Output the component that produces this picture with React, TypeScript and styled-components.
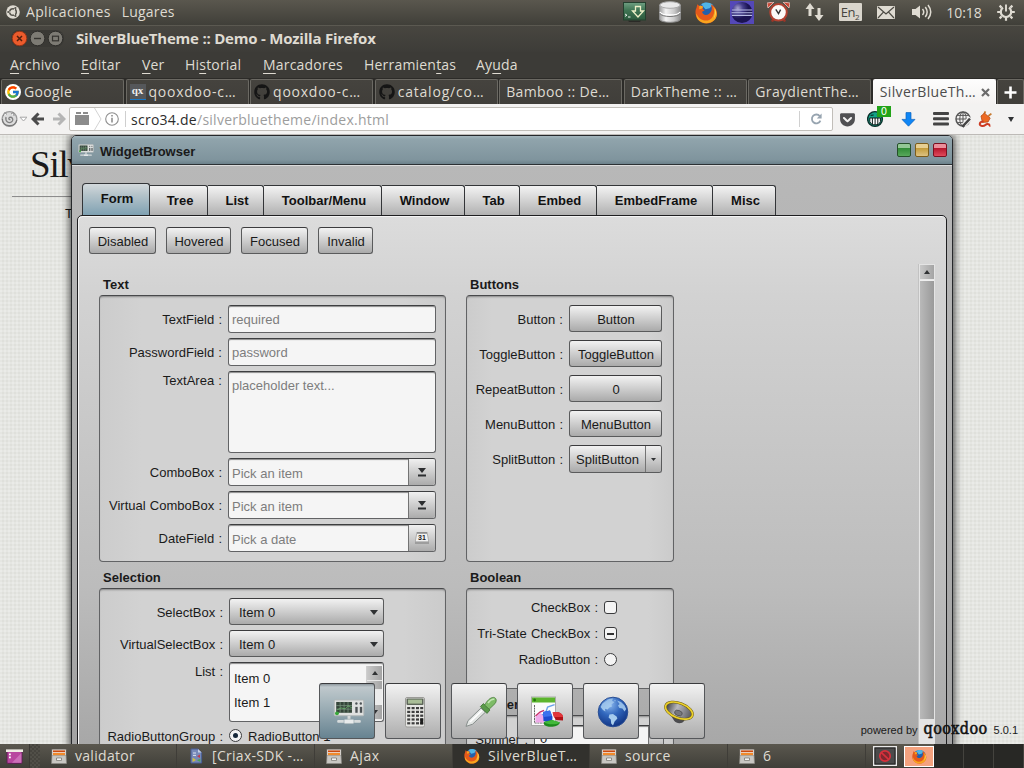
import React from "react";
import styled, { createGlobalStyle } from "styled-components";
import { FaGithub, FaGetPocket } from "react-icons/fa";
import { FcGoogle } from "react-icons/fc";

const Global = createGlobalStyle`
  * { box-sizing: border-box; }
  body { margin: 0; overflow: hidden; }
  button, input { font: inherit; }
`;

const desktopFont = `"Open Sans", "Noto Sans", sans-serif`;
const widgetFont = `"Liberation Sans", Arial, sans-serif`;

const Screen = styled.div`
  width: 1024px;
  height: 768px;
  display: flex;
  flex-direction: column;
  overflow: hidden;
  font-family: ${desktopFont};
  font-size: 14px;
  color: #dfdbd2;
`;

/* ---------- desktop panel ---------- */
const TopPanel = styled.header`
  height: 25px;
  flex: none;
  display: flex;
  align-items: flex-start;
  padding-left: 6px;
  background: linear-gradient(#5a574e, #403f39);
`;
const PanelIcon = styled.span`
  height: 24px;
  display: flex;
  align-items: center;
`;
const PanelLabel = styled.span<{ $ml: number; $ls?: number }>`
  margin-left: ${(p) => p.$ml}px;
  line-height: 23px;
  letter-spacing: ${(p) => p.$ls ?? 0}px;
`;
const Spacer = styled.div`
  flex: 1;
`;
const Indicator = styled.div<{ $w?: number }>`
  width: ${(p) => p.$w ?? 36}px;
  height: 24px;
  display: flex;
  align-items: center;
  justify-content: center;
`;

/* ---------- browser chrome ---------- */
const TitleBar = styled.div`
  height: 27px;
  flex: none;
  display: flex;
  align-items: flex-start;
  padding-left: 11px;
  border-top: 1px solid #5b5951;
  background: linear-gradient(#484640, #3d3c38);
`;
const TitleText = styled.h1`
  margin: 0 0 0 12px;
  font-size: 15px;
  line-height: 24px;
  letter-spacing: -0.22px;
`;
const MenuBar = styled.nav`
  height: 26px;
  flex: none;
  display: flex;
  padding-left: 10px;
  background: #3c3b37;
`;
const MenuItem = styled.span<{ $w: number }>`
  width: ${(p) => p.$w}px;
  line-height: 25px;
  white-space: nowrap;
  letter-spacing: 0.2px;
  u {
    text-underline-offset: 3px;
    text-decoration-thickness: 1px;
  }
`;
const TabStrip = styled.div`
  height: 26px;
  flex: none;
  display: flex;
  gap: 1.55px;
  padding: 1px 0 0 1px;
  background: #2c2b28;
`;
const BrowserTab = styled.div<{ $active?: boolean }>`
  width: 123px;
  flex: none;
  height: 25px;
  display: flex;
  align-items: center;
  gap: 3px;
  padding: 0 5px 0 ${(p) => (p.$active ? 6 : 3)}px;
  border: 1px solid ${(p) => (p.$active ? "#fbfafa" : "#6b6963")};
  border-bottom: 0;
  border-radius: 2px 2px 0 0;
  background: ${(p) => (p.$active ? "linear-gradient(#fdfdfd, #f4f2f1)" : "linear-gradient(#45433e, #403e3a)")};
  color: ${(p) => (p.$active ? "#4c4c4c" : "#dfdbd2")};
`;
const TabLabel = styled.span<{ $ls?: number; $ml?: number }>`
  flex: 1;
  white-space: nowrap;
  margin-left: ${(p) => p.$ml ?? 0}px;
  line-height: 22px;
  letter-spacing: ${(p) => p.$ls ?? 0.35}px;
`;
const NewTab = styled(BrowserTab)`
  width: 27px;
  justify-content: center;
  padding: 0;
`;
const QxIcon = styled.span`
  width: 16px;
  height: 16px;
  flex: none;
  background: #55575a;
  border-bottom: 1px solid #1878c8;
  color: #eee;
  font: bold 11px/13px "Liberation Serif", serif;
  text-align: center;
`;
const NavBar = styled.div`
  height: 31px;
  flex: none;
  display: flex;
  align-items: center;
  border-bottom: 1px solid #bdbab7;
  background: #f3f2f1;
`;
const NavCell = styled.div<{ $w: number }>`
  width: ${(p) => p.$w}px;
  height: 30px;
  flex: none;
  display: flex;
  align-items: center;
  justify-content: center;
  position: relative;
`;
const UrlBox = styled.div`
  width: 764px;
  height: 24px;
  flex: none;
  display: flex;
  align-items: center;
  border: 1px solid #c1beb9;
  border-radius: 2px;
  background: #fff;
`;
const Url = styled.span`
  flex: 1;
  padding-left: 4px;
  color: #9d9d9d;
  letter-spacing: 0.26px;
  b {
    font-weight: 400;
    color: #2c2c2c;
  }
`;
const VLine = styled.span<{ $h: number; $c?: string }>`
  width: 1px;
  height: ${(p) => p.$h}px;
  background: ${(p) => p.$c ?? "#d0d0d0"};
`;
const Badge = styled.span`
  position: absolute;
  left: 16px;
  top: 2px;
  width: 14px;
  height: 11px;
  background: #22a318;
  color: #fff;
  font: 10px/11px "DejaVu Sans", sans-serif;
  text-align: center;
`;

/* ---------- web page ---------- */
const Page = styled.main`
  height: 609px;
  flex: none;
  position: relative;
  overflow: hidden;
  padding: 10px 12px 0;
  background-color: #dfe0db;
  background-image: repeating-linear-gradient(90deg, rgba(255, 255, 255, 0.2) 0 2px, transparent 2px 4px),
    repeating-linear-gradient(0deg, rgba(255, 255, 255, 0.2) 0 2px, transparent 2px 4px);
  font-family: ${widgetFont};
  font-size: 13px;
  color: #1a1a1a;
`;
const PageTitle = styled.h2`
  width: 600px;
  margin: 0;
  padding-left: 18px;
  height: 52px;
  border-bottom: 1px solid #8d8d8d;
  font: 300 37px/40px "Liberation Serif", serif;
  letter-spacing: -1.2px;
`;
const PageText = styled.p`
  margin: 9px 0 0 53px;
`;

const DesktopWindow = styled.section`
  position: absolute;
  left: 71px;
  top: 0;
  width: 882px;
  height: 640px;
  border: 1px solid #26282b;
  border-radius: 5px 5px 0 0;
  background: linear-gradient(#b9b9b9, #a2a2a2);
  box-shadow: 0 0 9px 1px rgba(0, 0, 0, 0.75);
  display: flex;
  flex-direction: column;
`;
const Caption = styled.div`
  height: 29px;
  flex: none;
  display: flex;
  align-items: center;
  padding: 0 5px 0 6px;
  border-bottom: 1px solid #2c3134;
  border-radius: 4px 4px 0 0;
  background: linear-gradient(#a5b6bd, #90a4ac 3px, #7f949d 24px, #6c818b);
  box-shadow: 0 1px 0 #dcdcdc;
  font-weight: bold;
`;
const CaptionText = styled.span`
  flex: 1;
  padding: 3px 0 0 6px;
`;
const WinButton = styled.i<{ $tone: "green" | "yellow" | "red" }>`
  width: 14px;
  height: 14px;
  margin-left: 4px;
  border-radius: 2px;
  border: 1px solid ${(p) => ({ green: "#26502a", yellow: "#7c5d1c", red: "#7a1020" })[p.$tone]};
  background: ${(p) =>
    ({
      green: "linear-gradient(#93c795 0 4px, #2f8a35 4px, #58a85c)",
      yellow: "linear-gradient(#e6cf92 0 4px, #c39b38 4px, #dcc283)",
      red: "linear-gradient(#ea8f9b 0 4px, #b3142a 4px, #e04a5c)",
    })[p.$tone]};
`;
const TabBar = styled.div`
  height: 50px;
  flex: none;
  display: flex;
  align-items: flex-end;
  padding-left: 10px;
`;
const WidgetTab = styled.div<{ $w: number; $active?: boolean }>`
  width: ${(p) => p.$w}px;
  height: ${(p) => (p.$active ? 32 : 30)}px;
  line-height: ${(p) => (p.$active ? 29 : 30)}px;
  text-align: center;
  font-weight: bold;
  border: 1px solid #333538;
  border-width: ${(p) => (p.$active ? "1px 1px 0 1px" : "1px 1px 0 0")};
  border-radius: ${(p) => (p.$active ? "4px 3px 0 0" : "0 3px 0 0")};
  padding-left: ${(p) => (p.$active ? 2 : 3)}px;
  color: #111;
  background: ${(p) =>
    p.$active ? "linear-gradient(#d3d9dc, #b4c3ca 35%, #7fa1b2)" : "linear-gradient(#f3f3f3, #b1b1b1)"};
`;
const Pane = styled.div`
  width: 870px;
  height: 640px;
  flex: none;
  margin-left: 5px;
  padding: 10px 0 0 11px;
  border: 1px solid #1e1e20;
  border-radius: 5px 5px 0 0;
  background: linear-gradient(#dcdcdc, #d2d2d2 80px, #bcbcbc 370px, #a6a6a6 540px);
  box-shadow: inset 1px 1px 0 #f4f4f4;
`;
const DemoToolbar = styled.div`
  height: 38px;
  display: flex;
  align-items: flex-start;
  gap: 10px;
  padding-top: 1px;
`;
const PushButton = styled.button<{ $w: number; $h?: number }>`
  width: ${(p) => p.$w}px;
  height: ${(p) => p.$h ?? 27}px;
  padding: 2px 0 0 1px;
  border: 1px solid #5a5b5c;
  border-top-color: #3c3c3e;
  border-radius: 3px;
  background: linear-gradient(#f2f2f2, #aaaaaa);
  color: #1a1a1a;
  font-size: 13px;
  white-space: nowrap;
`;
const ScrollArea = styled.div`
  display: flex;
  justify-content: space-between;
`;
const Columns = styled.div`
  display: flex;
  gap: 20px;
  padding: 13px 0 0 10px;
`;
const Column = styled.div`
  display: flex;
  flex-direction: column;
  gap: 8px;
`;
const GroupTitle = styled.h3`
  margin: 0 0 3px 4px;
  font-size: 13px;
  line-height: 15px;
`;
const GroupBox = styled.div<{ $w: number; $h: number; $gap: number; $pt?: number }>`
  width: ${(p) => p.$w}px;
  height: ${(p) => p.$h}px;
  display: flex;
  flex-direction: column;
  gap: ${(p) => p.$gap}px;
  padding-top: ${(p) => p.$pt ?? 9}px;
  border: 1px solid #626365;
  border-top-color: #48494b;
  border-radius: 4px;
  background: linear-gradient(90deg, #cccccc, #d2d2d2 12%, #d2d2d2 88%, #cbcbcb);
  box-shadow: inset 0 2px 2px -1px rgba(0, 0, 0, 0.35);
`;
const FormRow = styled.div<{ $top?: boolean }>`
  display: flex;
  align-items: ${(p) => (p.$top ? "flex-start" : "center")};
`;
const Label = styled.label<{ $w: number; $pt?: number }>`
  width: ${(p) => p.$w}px;
  flex: none;
  padding: ${(p) => p.$pt ?? 2}px 6px 0 0;
  line-height: 15px;
  text-align: right;
  white-space: nowrap;
  word-spacing: 0.6px;
`;
const Field = styled.div<{ $w: number; $h: number }>`
  width: ${(p) => p.$w}px;
  height: ${(p) => p.$h}px;
  flex: none;
  display: flex;
  overflow: hidden;
  border: 1px solid #626365;
  border-top-color: #3d3e40;
  border-radius: 3px;
  background: #f5f5f5;
  box-shadow: inset 0 2px 1px -1px #8c8c8c;
`;
const Placeholder = styled.span<{ $low?: boolean }>`
  flex: 1;
  padding: ${(p) => (p.$low ? 6 : 5)}px 0 0 3px;
  line-height: 17px;
  color: #7d7d7d;
`;
const FieldButton = styled.span<{ $w: number }>`
  width: ${(p) => p.$w}px;
  display: flex;
  align-items: center;
  justify-content: center;
  border-left: 1px solid #737373;
  background: linear-gradient(#f0f0f0, #ababab);
`;
const SplitButton = styled.div`
  width: 93px;
  height: 28px;
  display: flex;
  overflow: hidden;
  border: 1px solid #5a5b5c;
  border-top-color: #3c3c3e;
  border-radius: 3px;
  background: linear-gradient(#f2f2f2, #aaaaaa);
`;
const SplitText = styled.span`
  flex: 1;
  padding-top: 1px;
  line-height: 25px;
  text-align: center;
`;
const SpinnerValue = styled.span`
  flex: 1;
  padding: 5px 0 0 5px;
`;
const Select = styled.div`
  width: 155px;
  height: 27px;
  display: flex;
  align-items: center;
  justify-content: space-between;
  padding: 2px 5px 0 9px;
  border: 1px solid #5a5b5c;
  border-top-color: #3c3c3e;
  border-radius: 3px;
  background: linear-gradient(#f2f2f2, #aaaaaa);
`;
const ListItems = styled.div`
  flex: 1;
  padding: 4px 0 0 4px;
  line-height: 24px;
`;
const MiniScroll = styled.div`
  width: 16px;
  height: 54px;
  margin: 3px 1px 0 0;
  display: flex;
  flex-direction: column;
  justify-content: space-between;
  background: #ececec;
  border-left: 1px solid #cfcfcf;
`;
const ScrollButton = styled.span<{ $h?: number }>`
  height: ${(p) => p.$h ?? 15}px;
  flex: none;
  display: flex;
  align-items: center;
  justify-content: center;
  border-bottom: 1px solid #e8e8e8;
  background: linear-gradient(90deg, #c9c9c9, #a4a4a4);
`;
const ScrollTrack = styled.div`
  width: 17px;
  height: 500px;
  margin-right: 11px;
  padding: 1px 1px 0;
  background: #e4e4e4;
  border-left: 1px solid #c2c2c2;
`;
const ScrollThumb = styled.div`
  height: 439px;
  border-top: 1px solid #eeeeee;
  background: linear-gradient(90deg, #b9b9b9, #9a9a9a);
`;
const CheckMark = styled.span<{ $round?: boolean }>`
  width: 13px;
  height: 13px;
  flex: none;
  display: flex;
  align-items: center;
  justify-content: center;
  border: 1px solid #3a3b3d;
  border-radius: ${(p) => (p.$round ? "50%" : "3px")};
  background: #f4f4f4;
`;
const Dash = styled.i`
  width: 7px;
  height: 2px;
  background: #333;
`;
const Dot = styled.i`
  width: 5px;
  height: 5px;
  border-radius: 50%;
  background: #16283a;
`;
const RadioText = styled.span`
  padding: 2px 0 0 6px;
`;
const Dock = styled.div`
  position: absolute;
  left: 319px;
  top: 548px;
  display: flex;
  gap: 10px;
`;
const DockButton = styled.div<{ $active?: boolean }>`
  width: 56px;
  height: 56px;
  display: flex;
  align-items: center;
  justify-content: center;
  padding: 2px 0 0 4px;
  border: 1px solid #55575a;
  border-top-color: #3a3b3d;
  border-radius: 3px;
  background: ${(p) =>
    p.$active ? "linear-gradient(#8d979d, #bfc8cc 3px, #a9b8be 30%, #678391)" : "linear-gradient(#f2f2f2, #adadad)"};
`;
const Powered = styled.div`
  position: absolute;
  right: 6px;
  bottom: 3px;
  display: flex;
  align-items: baseline;
  font-size: 11px;
  line-height: 22px;
`;
const PoweredLogo = styled.span`
  margin: 0 6px;
  font: 400 16px/20px "DejaVu Serif Condensed", "DejaVu Serif", serif;
  font-stretch: condensed;
  letter-spacing: 0.4px;
  -webkit-text-stroke: 0.5px #111;
  color: #111;
`;

/* ---------- bottom panel ---------- */
const TaskBar = styled.footer`
  height: 24px;
  flex: none;
  display: flex;
  background: linear-gradient(#5a574e, #403f39);
`;
const ShowDesktop = styled.div`
  width: 30px;
  display: flex;
  align-items: center;
  justify-content: center;
  border-right: 1px solid #3b3934;
`;
const Task = styled.div<{ $w: number; $active?: boolean }>`
  width: ${(p) => p.$w}px;
  display: flex;
  align-items: center;
  gap: 8px;
  padding-left: 11px;
  border-right: 1px solid #3f3d38;
  background: ${(p) => (p.$active ? "#32312d" : "transparent")};
  line-height: 23px;
  white-space: nowrap;
`;
const TaskText = styled.span<{ $ls?: number }>`
  letter-spacing: ${(p) => p.$ls ?? 0.3}px;
  padding-bottom: 2px;
`;
const Grip = styled.div`
  width: 10px;
  background: repeating-conic-gradient(#46443e 0 25%, #514f48 0 50%) 0 0 / 4px 4px;
`;
const Applet = styled.div`
  width: 38px;
  display: flex;
  align-items: center;
  justify-content: center;
`;
const Workspace = styled.div<{ $active?: boolean }>`
  width: 30px;
  display: flex;
  align-items: center;
  justify-content: center;
  margin: ${(p) => (p.$active ? "2px 0 1px" : "0")};
  border: ${(p) => (p.$active ? "1px solid #fff" : "0")};
  border-right: 1px solid ${(p) => (p.$active ? "#fff" : "#44433e")};
  background: ${(p) => (p.$active ? "#f4a27f" : "#282825")};
`;

/* ---------- drawings ---------- */
const UbuntuIcon = () => (
  <svg width="14" height="14" viewBox="0 0 14 14">
    <circle cx="7" cy="7" r="6.8" fill="#dfdbd2" />
    <circle cx="7" cy="7" r="3.3" fill="none" stroke="#55534b" strokeWidth="1.5" />
    <path d="M7 7 L2.4 7 M7 7 L9.4 3 M7 7 L9.4 11" stroke="#dfdbd2" strokeWidth="1" />
    <g fill="#55534b">
      <circle cx="2.3" cy="7" r="1.1" />
      <circle cx="9.4" cy="3" r="1.1" />
      <circle cx="9.4" cy="11" r="1.1" />
    </g>
  </svg>
);

const Firefox = ({ s }: { s: number }) => (
  <svg width={s} height={s} viewBox="0 0 22 22">
    <circle cx="11" cy="10.6" r="9.2" fill="#2360ad" />
    <path d="M6 3 C9 .6 14 1 17 3.5 L14 7 L10 8 Z" fill="#50b5e6" />
    <path
      d="M2.2 3.2 L4.2 4.8 C5.6 4.2 6.8 4.6 7.6 5.4 L7.2 7.4 L9.2 9.2 L6.8 10.4 C7 13.4 11 14.2 13.2 12.4 C15.4 11 17.4 7.8 15 3.2 C20.5 5.6 23 12.4 19.2 17.4 C15.4 22.6 7.2 22.8 3 18 C-.4 14 .2 8.6 1.4 6.6 Z"
      fill="#e5591b"
    />
    <path
      d="M1.4 12 C3.4 17.8 9.6 20.4 14.4 17.6 C18.6 15 19.2 9 17 5 C21.6 9 22 14.6 18.6 18.2 C14 22.6 6.6 22.2 3 18 C1.6 16.2 1 14 1.4 12 Z"
      fill="#f9a51e"
    />
    <path d="M19 7 C20.6 10.4 20 14 18 16.8 C19.2 13.6 19.4 10 19 7 Z" fill="#ffe36a" />
    <path d="M4.2 4.8 C5.6 4.2 6.8 4.6 7.6 5.4 L7 7.2 L4 8 Z" fill="#f9a51e" />
  </svg>
);

const TerminalIcon = () => (
  <svg width="23" height="20" viewBox="0 0 23 20">
    <defs>
      <linearGradient id="term" x2="0" y2="1">
        <stop stopColor="#6f9f82" />
        <stop offset=".45" stopColor="#3f7453" />
        <stop offset="1" stopColor="#2c5a3d" />
      </linearGradient>
    </defs>
    <path d="M5 18.5 H18 L17 20 H6 Z" fill="#2b2a27" />
    <rect x=".5" y=".5" width="22" height="17.5" fill="url(#term)" stroke="#25402f" />
    <path d="M2 12 L4 13.2 L2 14.4 M5 15 H7.5" stroke="#e8efe9" fill="none" />
    <path d="M12.5 4.5 H17.5 V9 H20.5 L15 15 L9.5 9 H12.5 Z" fill="none" stroke="#eef0c8" strokeWidth="1.3" />
  </svg>
);

const DatabaseIcon = () => (
  <svg width="22" height="22" viewBox="0 0 22 22">
    <defs>
      <linearGradient id="db">
        <stop stopColor="#9b9b9b" />
        <stop offset=".3" stopColor="#f3f3f3" />
        <stop offset=".7" stopColor="#c9c9c9" />
        <stop offset="1" stopColor="#8c8c8c" />
      </linearGradient>
    </defs>
    <path d="M.5 4 V18 C.5 22.4 21.5 22.4 21.5 18 V4 Z" fill="url(#db)" stroke="#8b8b8b" />
    <ellipse cx="11" cy="4" rx="10.2" ry="3.3" fill="#e9e9e9" stroke="#aaa" />
    <path d="M1 11 C3 15 19 15 21 11" fill="none" stroke="#fff" strokeWidth="1.4" />
    <path d="M1 12.5 C3 16.5 19 16.5 21 12.5" fill="none" stroke="#777" />
  </svg>
);

const EclipseIcon = () => (
  <svg width="24" height="23" viewBox="0 0 24 23">
    <defs>
      <radialGradient id="ecl" cx=".3" cy=".3">
        <stop stopColor="#a7a2cf" />
        <stop offset=".5" stopColor="#463f8e" />
        <stop offset="1" stopColor="#1b1452" />
      </radialGradient>
    </defs>
    <rect width="24" height="23" fill="#5448b8" />
    <circle cx="12" cy="11.5" r="10.5" fill="url(#ecl)" />
    <path d="M2 9 H22 M1.5 11.7 H22.5 M2 14.4 H22" stroke="#b9bde6" strokeWidth="1.1" />
  </svg>
);

const AlarmIcon = () => (
  <svg width="23" height="20" viewBox="0 0 23 20">
    <path d="M1 6 L0 1 L7 0 Z M22 6 L23 1 L16 0 Z" fill="#c94a38" stroke="#ecc7c0" strokeWidth=".8" />
    <path d="M5 19.5 L7 16 M18 19.5 L16 16" stroke="#9c3527" strokeWidth="2.4" />
    <circle cx="11.5" cy="10.3" r="8.3" fill="#fbfaf8" stroke="#b14231" strokeWidth="2" />
    <path d="M8.8 7.4 L11.5 11.6 L13.6 7.6" fill="none" stroke="#333" strokeWidth="1.4" />
  </svg>
);

const ArrowsIcon = () => (
  <svg width="19" height="18" viewBox="0 0 19 18" fill="#dfdbd2">
    <path d="M5 0 L9.5 6 H6.5 V13 H3.5 V6 H.5 Z M14 18 L9.5 12 H12.5 V5 H15.5 V12 H18.5 Z" />
  </svg>
);

const Lang = styled.span`
  width: 23px;
  height: 18px;
  border-radius: 1px;
  background: #d9d5cc;
  color: #46443e;
  font-size: 13px;
  line-height: 19px;
  text-align: center;
  letter-spacing: -0.5px;
  sub {
    font-size: 8px;
    vertical-align: -3px;
    line-height: 0;
  }
`;

const MailIcon = () => (
  <svg width="18" height="13" viewBox="0 0 18 13">
    <rect width="18" height="13" rx="1" fill="#dfdbd2" />
    <path d="M1 1 L9 8 L17 1 M1 12 L6.4 6.2 M17 12 L11.6 6.2" stroke="#4b4942" strokeWidth="1.2" fill="none" />
  </svg>
);

const SoundIcon = () => (
  <svg width="21" height="16" viewBox="0 0 21 16">
    <path d="M0 5 H3.5 L8 1.5 V14.5 L3.5 11 H0 Z" fill="#dfdbd2" />
    <path d="M10.5 5 Q13 8 10.5 11 M13.3 3 Q17 8 13.3 13 M16 1 Q21.5 8 16 15" fill="none" stroke="#dfdbd2" strokeWidth="1.5" />
  </svg>
);

const GearIcon = () => (
  <svg width="18" height="18" viewBox="0 0 18 18" fill="none" stroke="#dfdbd2">
    <path d="M12 4.6 A5.2 5.2 0 1 1 6 4.6" strokeWidth="2.2" />
    <path d="M9 1.5 V8.5" strokeWidth="1.9" />
    <path
      d="M4.6 4.6 L2.6 2.6 M13.4 4.6 L15.4 2.6 M3.2 9 H.2 M14.8 9 H17.8 M4.6 13.4 L2.6 15.4 M13.4 13.4 L15.4 15.4 M9 14.8 V17.8"
      strokeWidth="2.2"
    />
  </svg>
);

const WindowControls = () => (
  <svg width="53" height="25" viewBox="0 -3.5 53 25">
    <rect width="53" height="17" y=".5" rx="8" fill="#3a3935" />
    <circle cx="8.5" cy="9" r="7.3" fill="#ec5b2c" stroke="#8e3519" />
    <path d="M6 6.5 L11 11.5 M11 6.5 L6 11.5" stroke="#51200f" strokeWidth="1.5" />
    <circle cx="26.5" cy="9" r="7.3" fill="#7d7b74" stroke="#2f2e2b" />
    <path d="M23 9 H30" stroke="#34332f" strokeWidth="1.4" />
    <circle cx="44.5" cy="9" r="7.3" fill="#7d7b74" stroke="#2f2e2b" />
    <rect x="41.5" y="6.7" width="6" height="4.6" fill="none" stroke="#34332f" strokeWidth="1.2" />
  </svg>
);

const IdentityIcon = () => (
  <svg width="57" height="22" viewBox="0 0 57 22">
    <g fill="#8c8c8c">
      <rect x="5" y="7" width="14" height="10" />
      <rect x="6" y="4" width="5" height="2" />
      <rect x="13" y="4" width="5" height="2" />
    </g>
    <path d="M24.5 0 L31 11 L24.5 22" fill="none" stroke="#d3d3d3" />
    <circle cx="42" cy="11" r="6.3" fill="none" stroke="#8e8e8e" strokeWidth="1.1" />
    <path d="M42 9.8 V14.4 M42 7 V8.4" stroke="#8e8e8e" strokeWidth="1.6" />
    <path d="M55.5 3 V19" stroke="#cfcfcf" />
  </svg>
);

const FaceGlyph = () => (
  <svg width="26" height="18" viewBox="0 0 26 18">
    <circle cx="8.5" cy="9" r="7.4" fill="#dcdcdc" stroke="#9a9a9a" strokeWidth="1.2" />
    <path d="M1.4 9 C1.4 17 14 18.4 15.8 10" fill="none" stroke="#777" strokeWidth="1.2" />
    <path d="M2.4 6 L3.6 2.6 L6 4.4 M10 4 L12.6 2.4 L13 6" stroke="#8a8a8a" fill="#f3f3f3" strokeWidth="1" />
    <path d="M5 7 C4 12 8 14 11 11.6 C13 9.4 11 6.6 8.6 7.4 C7 8.4 8 10 9.4 9.6" stroke="#808080" fill="none" strokeWidth="1.3" />
    <path d="M19 7.2 L22.5 11 L26 7.2 Z" fill="#fff" stroke="#a6a6a6" />
  </svg>
);

const ArrowSvg = styled.svg<{ $flip?: boolean }>`
  transform: ${(p) => (p.$flip ? "scaleX(-1)" : "none")};
`;
const NavArrow = ({ right }: { right?: boolean }) => (
  <ArrowSvg $flip={right} width="14" height="14" viewBox="0 0 14 14">
    <path d="M7.5 1.5 L2 7 L7.5 12.5 M2.5 7 H13" fill="none" stroke={right ? "#b5b5b5" : "#4b4b4b"} strokeWidth="3" />
  </ArrowSvg>
);

const ReloadIcon = () => (
  <svg width="12" height="12" viewBox="0 0 12 12">
    <path d="M9.8 3.2 A4.4 4.4 0 1 0 10.4 7.6" fill="none" stroke="#97a4b0" strokeWidth="1.8" />
    <path d="M11.6 .6 V5.4 H6.8 Z" fill="#97a4b0" />
  </svg>
);

const GrinIcon = () => (
  <svg width="17" height="18" viewBox="0 0 17 18">
    <circle cx="8" cy="9" r="7.4" fill="#12a388" stroke="#0b2f2a" strokeWidth="1.4" />
    <path d="M2.8 8 H13.4 V11.6 C12.4 16 4 16 2.8 11.6 Z" fill="#fff" stroke="#0e1a18" />
    <path d="M5.4 8 V14 M8.1 8 V15 M10.8 8 V14 M3.6 5.4 L6.6 5 M9.8 5 L12.6 5.4" stroke="#0e1a18" />
  </svg>
);

const DownIcon = () => (
  <svg width="15" height="15" viewBox="0 0 15 15">
    <path d="M5 .6 H10 V7.4 H14 L7.5 14.2 L1 7.4 H5 Z" fill="#0f86f5" stroke="#0a62bd" strokeWidth=".7" />
  </svg>
);

const MenuLines = () => (
  <svg width="16" height="14" viewBox="0 0 16 14" fill="#444">
    <rect y="0" width="16" height="3" rx="1" />
    <rect y="5.2" width="16" height="3" rx="1" />
    <rect y="10.4" width="16" height="3" rx="1" />
  </svg>
);

const GlobePencil = () => (
  <svg width="17" height="17" viewBox="0 0 17 17" fill="none" stroke="#555">
    <circle cx="8" cy="8" r="7" strokeWidth="1.5" />
    <ellipse cx="8" cy="8" rx="3.2" ry="7" />
    <path d="M8 1 V15 M1 8 H15 M2.3 4.4 H13.7 M2.3 11.6 H13.7" />
    <path d="M15.6 7 L8.6 14.4" stroke="#f3f2f1" strokeWidth="5" />
    <path d="M15 7.6 L9 14 L7.6 16" stroke="#444" strokeWidth="2.4" />
  </svg>
);

const PlugIcon = () => (
  <svg width="14" height="17" viewBox="0 0 14 17">
    <path d="M6 3.4 L7.4 .4 M10.4 5 L13.4 2.6" stroke="#c77a30" strokeWidth="1.8" />
    <path d="M3 5 L6.4 2.2 L12.2 7 L10 11 L4.4 11.4 Z" fill="#ee6a23" stroke="#b84a16" strokeWidth=".8" />
    <path d="M5.6 10.6 C1 10.6 .6 14.6 4 15 C7.6 15.6 7 12.6 10 13 C12 13.2 11 15 12.4 15" fill="none" stroke="#cc3a22" strokeWidth="2" />
  </svg>
);

const Triangle = ({ w, h, up }: { w: number; h: number; up?: boolean }) => (
  <svg width={w} height={h} viewBox="0 0 10 6" preserveAspectRatio="none">
    <path d={up ? "M0 6 L5 0 L10 6 Z" : "M0 0 L5 6 L10 0 Z"} fill="#303234" />
  </svg>
);

const ComboArrow = () => (
  <svg width="8" height="9" viewBox="0 0 8 9" fill="#2c2e30">
    <path d="M0 0 H8 L4 5 Z" />
    <rect y="6.5" width="8" height="2" />
  </svg>
);

const CalendarIcon = () => (
  <svg width="14" height="12" viewBox="0 0 14 12">
    <path d="M2 0 H12 L14 11 V12 H0 V11 Z" fill="#f1f1f1" stroke="#999" strokeWidth=".7" />
    <rect x="0" y="9.4" width="14" height="2.6" fill="#9d9d9d" />
    <rect x="2" y="0" width="10" height="1.8" fill="#8e8e8e" />
    <text x="7" y="8.2" textAnchor="middle" fontSize="7" fontWeight="bold" fontFamily="Liberation Sans" fill="#222">
      31
    </text>
  </svg>
);

const MonitorIcon = ({ s }: { s: number }) => (
  <svg width={s} height={s * 0.8} viewBox="0 0 32 26">
    <rect x="1" y="1" width="30" height="16" rx="1" fill="#dfe1e0" stroke="#b3b8b8" />
    <rect x="3" y="3" width="16" height="11" fill="#35453a" />
    <path d="M3 6.7 H19 M3 10.3 H19 M7 3 V14 M11 3 V14 M15 3 V14" stroke="#7f9b85" strokeWidth=".7" />
    <path d="M4 11 L8 9 L12 10 L15 7 L19 9" stroke="#6fbf6e" fill="none" strokeWidth=".7" />
    <circle cx="3.8" cy="14.6" r="2" fill="#38a83a" />
    <g fill="#4c5255">
      <circle cx="23.5" cy="4.6" r="1.2" />
      <circle cx="28" cy="4.6" r="1.2" />
      <rect x="22.4" y="8" width="2.4" height="6" />
      <rect x="27" y="8" width="2.4" height="6" />
    </g>
    <path d="M16 17 V22" stroke="#d5d9da" strokeWidth="3" />
    <rect x="4" y="21.4" width="24" height="2.6" rx="1" fill="#d6dbdc" />
    <rect x="11" y="20.6" width="10" height="4.6" rx="1" fill="#e8ebec" stroke="#8fa0a7" strokeWidth=".6" />
  </svg>
);

const CalculatorIcon = () => (
  <svg width="22" height="32" viewBox="0 0 22 32">
    <rect x="1.5" y="1.5" width="19" height="29.5" rx="1.5" fill="#e6e6e3" stroke="#9b9b98" />
    <rect x="2.5" y="2.5" width="17" height="6.5" rx="1" fill="#5d6659" />
    <rect x="4" y="3.6" width="14" height="4" fill="#a9bd97" />
    {[11, 14.8, 18.6, 22.4, 26.2].map((y) =>
      [3.2, 7.6, 12, 16.2].map((x) => <rect key={`${x}-${y}`} x={x} y={y} width="3" height="2.2" fill="#3e3e3e" />),
    )}
    <rect x="16.2" y="22.4" width="3" height="6" fill="#1d1d1d" />
  </svg>
);

const EyedropperIcon = () => (
  <svg width="34" height="32" viewBox="0 0 34 32">
    <path d="M2 30.4 L4 24.6 L17 12 L21.4 16.2 L8.6 28.2 Z" fill="#e3e6e4" stroke="#868d8b" strokeWidth="1" />
    <path d="M6 26 L18 14.4" stroke="#fff" strokeWidth="1.6" />
    <path d="M16.4 10.6 L19.4 7.6 L26 14 L23 17.4 Z" fill="#5a9a4a" stroke="#3f7133" strokeWidth=".8" />
    <path d="M20.6 9 C23 5 26 1.4 29.6 1.4 C33 2 32.6 5.6 31 7.6 L25.2 13.2 Z" fill="#7dbb66" stroke="#457a37" strokeWidth=".8" />
    <path d="M24 7 C26 4.4 28.4 3 30.4 3.4" stroke="#c3e6b4" strokeWidth="1.6" fill="none" />
  </svg>
);

const ChartIcon = () => (
  <svg width="34" height="32" viewBox="0 0 34 32">
    <rect x="1.5" y="1" width="24" height="28.5" fill="#fbfbfb" stroke="#a9a9a9" />
    <rect x="2" y="1.5" width="23" height="5" fill="#5cb52e" />
    <circle cx="4.6" cy="4" r="1.4" fill="#23760d" />
    <path d="M4.5 9 V27 H16" fill="none" stroke="#666" strokeDasharray="2 .6" />
    <path d="M5.5 26.5 V21 L10 17 L14 19 V26.5 Z" fill="#f0a9ea" />
    <path d="M5.5 20 L10 16 L14 14.4" fill="none" stroke="#c8306a" strokeWidth="1.4" />
    <path d="M12 19 L15.6 17 L17.6 11 L24.6 8.6" fill="none" stroke="#6aa2e8" strokeWidth="1.4" />
    <path d="M13 16 L20 14.5 L22.5 21 L22 27.5 L13.5 25 Z" fill="#1c4bd0" />
    <path d="M13 16 L20 14.5 L22 20 L13.5 21 Z" fill="#3a71ee" />
    <path d="M24 21 L22.6 16.6 C27 14.8 33 17 33 21 V24.4 L26 24 Z" fill="#b01218" />
    <path d="M24 21 L22.6 16.6 C27 14.8 33 17 33 21 Z" fill="#e2363b" />
    <path d="M14 26 L22 24 L30 26.4 C28 31.6 17 32 14 28.4 Z" fill="#1c8a1c" />
    <path d="M14 26 L22 24 L30 26.4 C27 29 17 29 14 26 Z" fill="#42b93a" />
  </svg>
);

const GlobeIcon = () => (
  <svg width="32" height="32" viewBox="0 0 32 32">
    <defs>
      <radialGradient id="earth" cx=".4" cy=".25" r=".8">
        <stop stopColor="#8ab7ee" />
        <stop offset=".45" stopColor="#3167bd" />
        <stop offset="1" stopColor="#0e2f7e" />
      </radialGradient>
      <linearGradient id="land" x2="0" y2="1">
        <stop stopColor="#9cc2ea" />
        <stop offset="1" stopColor="#c9ecff" />
      </linearGradient>
    </defs>
    <circle cx="16" cy="16" r="14.8" fill="url(#earth)" stroke="#2a4f94" />
    <path
      d="M3.6 11 L5.4 7.4 L9 5 L12 3 L16 2.6 L15 5 L17.6 6 L14.4 8.4 L15 10.4 L12.4 11.4 L10.6 13.6 L8 12.8 L8.4 15.6 L6 14 Z M12.4 18.6 L16 18 L19.6 20.4 L20.4 22.6 L17.6 25.4 L16 29.4 L14.2 27.6 L13.8 23.6 L11.6 21.4 Z M20 4.4 L24 6 L27.4 9.2 L29.2 13 L27.6 15.6 L25.4 12.6 L22.4 12 L21 9.4 L22.6 8 Z M17 4 L19 4.6 L18 5.6 Z"
      fill="url(#land)"
      opacity=".85"
    />
  </svg>
);

const SpeakerIcon = () => (
  <svg width="32" height="26" viewBox="0 0 32 26">
    <defs>
      <linearGradient id="cone">
        <stop stopColor="#3a3a3c" />
        <stop offset=".4" stopColor="#b9b9be" />
        <stop offset="1" stopColor="#55555a" />
      </linearGradient>
    </defs>
    <path d="M7 15 L11 21.4 C13.4 25 19 25 21 22 L22.4 18 Z" fill="#4c4c4f" />
    <ellipse cx="16" cy="11.6" rx="14.2" ry="7.4" transform="rotate(21 16 11.6)" fill="url(#cone)" stroke="#6a5a10" strokeWidth="2.6" />
    <ellipse cx="16" cy="11.6" rx="14.2" ry="7.4" transform="rotate(21 16 11.6)" fill="none" stroke="#ecd02c" strokeWidth="1.7" />
    <ellipse cx="15.4" cy="14" rx="4" ry="2.6" transform="rotate(20 15.4 14)" fill="#77777c" stroke="#4a4a4d" strokeWidth=".7" />
  </svg>
);

const DrawerIcon = () => (
  <svg width="16" height="15" viewBox="0 0 16 15">
    <rect x="1" y=".3" width="14" height="7" fill="#f5f0ea" stroke="#8b8680" strokeWidth=".6" />
    <rect x="2" y="1.4" width="12" height="1.8" fill="#c9490f" />
    <rect x="2" y="4" width="12" height="2.6" fill="#f08a2c" />
    <path d="M1 6.6 H15 L15.5 14.6 H.5 Z" fill="#c9c7c3" stroke="#8f8d88" strokeWidth=".6" />
    <path d="M5.5 9 V11.4 H10.5 V9 Z" fill="#fff" stroke="#77756f" strokeWidth=".8" />
  </svg>
);

const DocIcon = () => (
  <svg width="16" height="16" viewBox="0 0 16 16">
    <path d="M3 1 H10 L13.6 4.6 V15 H3 Z" fill="#7789b8" stroke="#4b5f96" />
    <path d="M10 1 V4.6 H13.6" fill="#c6cfe6" />
    <path d="M5 5 H8 M5 7.4 H8" stroke="#dde3f2" />
    <path d="M12 6.6 V10 L9 8.3 Z" fill="#c43b4b" />
    <path d="M4.6 9.6 L8 12 L4.6 14 Z" fill="#d2c13b" />
    <path d="M12.4 10.4 V14 L9 12.2 Z" fill="#4ba35a" />
  </svg>
);

const DesktopIcon = () => (
  <svg width="17" height="15" viewBox="0 0 17 15">
    <rect x="1" y="2" width="15" height="12.4" rx="1" fill="#b8479f" stroke="#5b1f52" />
    <rect x="0" y=".4" width="17" height="2.6" fill="#efece4" />
    <path d="M3 5.4 H4.8 M3 8.4 H4.8" stroke="#fff" strokeWidth="1.8" />
    <path d="M6 13.8 L15.4 4 V13.8 Z" fill="#cc6fb9" />
  </svg>
);

const BlockedIcon = () => (
  <svg width="24" height="20" viewBox="0 0 24 20">
    <rect x=".7" y=".7" width="22.6" height="18.6" fill="#4b4b4b" stroke="#e8e8e8" strokeWidth="1.4" />
    <rect x="2" y="2" width="20" height="16" fill="none" stroke="#222" />
    <circle cx="12" cy="10" r="5.2" fill="#80282f" stroke="#d8303c" strokeWidth="1.7" />
    <path d="M8.4 6.6 L15.6 13.4" stroke="#d8303c" strokeWidth="1.7" />
  </svg>
);

const PlusIcon = () => (
  <svg width="13" height="13" viewBox="0 0 13 13">
    <path d="M6.5 .5 V12.5 M.5 6.5 H12.5" stroke="#fff" strokeWidth="2.6" />
  </svg>
);

const CloseIcon = () => (
  <svg width="9" height="9" viewBox="0 0 9 9">
    <path d="M1 1 L8 8 M8 1 L1 8" stroke="#6b6b6b" strokeWidth="2.2" />
  </svg>
);

const GithubMark = styled(FaGithub)`
  width: 16px;
  height: 16px;
  flex: none;
  color: #151515;
`;
const GoogleMark = styled(FcGoogle)`
  width: 16px;
  height: 16px;
  flex: none;
  padding: 1px;
  border-radius: 8px;
  background: #fff;
`;

const widgetTabs: [string, number][] = [
  ["Form", 68], ["Tree", 58], ["List", 56], ["Toolbar/Menu", 118], ["Window", 83],
  ["Tab", 55], ["Embed", 77], ["EmbedFrame", 116], ["Misc", 63],
];

export default function App() {
  return (
    <Screen>
      <Global />
      <TopPanel>
        <PanelIcon><UbuntuIcon /></PanelIcon>
        <PanelLabel $ml={6} $ls={0.33}>Aplicaciones</PanelLabel>
        <PanelLabel $ml={11} $ls={0.2}>Lugares</PanelLabel>
        <Spacer />
        <Indicator><TerminalIcon /></Indicator>
        <Indicator><DatabaseIcon /></Indicator>
        <Indicator><Firefox s={23} /></Indicator>
        <Indicator><EclipseIcon /></Indicator>
        <Indicator><AlarmIcon /></Indicator>
        <Indicator><ArrowsIcon /></Indicator>
        <Indicator><Lang>En<sub>2</sub></Lang></Indicator>
        <Indicator><MailIcon /></Indicator>
        <Indicator><SoundIcon /></Indicator>
        <Indicator $w={48}>10:18</Indicator>
        <Indicator><GearIcon /></Indicator>
      </TopPanel>
      <TitleBar>
        <WindowControls />
        <TitleText>SilverBlueTheme :: Demo - Mozilla Firefox</TitleText>
      </TitleBar>
      <MenuBar>
        <MenuItem $w={71}><u>A</u>rchivo</MenuItem>
        <MenuItem $w={61}><u>E</u>ditar</MenuItem>
        <MenuItem $w={43}><u>V</u>er</MenuItem>
        <MenuItem $w={78}>Hi<u>s</u>torial</MenuItem>
        <MenuItem $w={101}><u>M</u>arcadores</MenuItem>
        <MenuItem $w={112}>Herramien<u>t</u>as</MenuItem>
        <MenuItem $w={60}>Ay<u>u</u>da</MenuItem>
      </MenuBar>
      <TabStrip>
        <BrowserTab><GoogleMark /><TabLabel>Google</TabLabel></BrowserTab>
        <BrowserTab><QxIcon>qx</QxIcon><TabLabel $ls={0.75}>qooxdoo-c…</TabLabel></BrowserTab>
        <BrowserTab><GithubMark /><TabLabel $ls={0.75}>qooxdoo-c…</TabLabel></BrowserTab>
        <BrowserTab><GithubMark /><TabLabel $ls={0.8}>catalog/co…</TabLabel></BrowserTab>
        <BrowserTab><TabLabel $ml={3}>Bamboo :: De…</TabLabel></BrowserTab>
        <BrowserTab><TabLabel $ml={3}>DarkTheme :: …</TabLabel></BrowserTab>
        <BrowserTab><TabLabel $ml={3}>GraydientThe…</TabLabel></BrowserTab>
        <BrowserTab $active><TabLabel>SilverBlueTh…</TabLabel><CloseIcon /></BrowserTab>
        <NewTab><PlusIcon /></NewTab>
      </TabStrip>
      <NavBar>
        <NavCell $w={28}><FaceGlyph /></NavCell>
        <NavCell $w={20}><NavArrow /></NavCell>
        <NavCell $w={21}><NavArrow right /></NavCell>
        <UrlBox>
          <IdentityIcon />
          <Url><b>scro34.de</b>/silverbluetheme/index.html</Url>
          <VLine $h={16} />
          <NavCell $w={32}><ReloadIcon /></NavCell>
        </UrlBox>
        <NavCell $w={28}><FaGetPocket size={17} color="#505052" /></NavCell>
        <NavCell $w={28}><GrinIcon /><Badge>0</Badge></NavCell>
        <NavCell $w={39}><DownIcon /></NavCell>
        <VLine $h={26} $c="#a9bccf" />
        <NavCell $w={26}><MenuLines /></NavCell>
        <NavCell $w={18}><GlobePencil /></NavCell>
        <NavCell $w={25}><PlugIcon /></NavCell>
        <NavCell $w={28}><Triangle w={6} h={5} /></NavCell>
      </NavBar>
      <Page>
        <PageTitle>Silv</PageTitle>
        <PageText>This</PageText>
        <DesktopWindow>
          <Caption>
            <MonitorIcon s={16} />
            <CaptionText>WidgetBrowser</CaptionText>
            <WinButton $tone="green" />
            <WinButton $tone="yellow" />
            <WinButton $tone="red" />
          </Caption>
          <TabBar>
            {widgetTabs.map(([name, w], i) => (
              <WidgetTab key={name} $w={w} $active={i === 0}>{name}</WidgetTab>
            ))}
          </TabBar>
          <Pane>
            <DemoToolbar>
              <PushButton $w={67}>Disabled</PushButton>
              <PushButton $w={65}>Hovered</PushButton>
              <PushButton $w={67}>Focused</PushButton>
              <PushButton $w={55}>Invalid</PushButton>
            </DemoToolbar>
            <ScrollArea>
              <Columns>
                <Column>
                  <div>
                    <GroupTitle>Text</GroupTitle>
                    <GroupBox $w={347} $h={267} $gap={5}>
                      <FormRow><Label $w={128} $pt={0}>TextField :</Label><Field $w={208} $h={28}><Placeholder>required</Placeholder></Field></FormRow>
                      <FormRow><Label $w={128} $pt={0}>PasswordField :</Label><Field $w={208} $h={28}><Placeholder>password</Placeholder></Field></FormRow>
                      <FormRow $top><Label $w={128}>TextArea :</Label><Field $w={208} $h={82}><Placeholder>placeholder text...</Placeholder></Field></FormRow>
                      <FormRow><Label $w={128} $pt={0}>ComboBox :</Label><Field $w={208} $h={28}><Placeholder $low>Pick an item</Placeholder><FieldButton $w={27}><ComboArrow /></FieldButton></Field></FormRow>
                      <FormRow><Label $w={128} $pt={0}>Virtual ComboBox :</Label><Field $w={208} $h={28}><Placeholder $low>Pick an item</Placeholder><FieldButton $w={27}><ComboArrow /></FieldButton></Field></FormRow>
                      <FormRow><Label $w={128} $pt={0}>DateField :</Label><Field $w={208} $h={28}><Placeholder $low>Pick a date</Placeholder><FieldButton $w={27}><CalendarIcon /></FieldButton></Field></FormRow>
                    </GroupBox>
                  </div>
                  <div>
                    <GroupTitle>Selection</GroupTitle>
                    <GroupBox $w={347} $h={200} $gap={5}>
                      <FormRow><Label $w={129}>SelectBox :</Label><Select>Item 0<Triangle w={8} h={5} /></Select></FormRow>
                      <FormRow><Label $w={129}>VirtualSelectBox :</Label><Select>Item 0<Triangle w={8} h={5} /></Select></FormRow>
                      <FormRow $top>
                        <Label $w={129}>List :</Label>
                        <Field $w={155} $h={60}>
                          <ListItems>Item 0<br />Item 1</ListItems>
                          <MiniScroll>
                            <div>
                              <ScrollButton><Triangle w={6} h={4} up /></ScrollButton>
                              <ScrollButton $h={9} />
                            </div>
                            <ScrollButton><Triangle w={6} h={4} /></ScrollButton>
                          </MiniScroll>
                        </Field>
                      </FormRow>
                      <FormRow><Label $w={129}>RadioButtonGroup :</Label><CheckMark $round><Dot /></CheckMark><RadioText>RadioButton 1</RadioText></FormRow>
                    </GroupBox>
                  </div>
                </Column>
                <Column>
                  <div>
                    <GroupTitle>Buttons</GroupTitle>
                    <GroupBox $w={208} $h={267} $gap={8}>
                      <FormRow><Label $w={102}>Button :</Label><PushButton $w={93}>Button</PushButton></FormRow>
                      <FormRow><Label $w={102}>ToggleButton :</Label><PushButton $w={93}>ToggleButton</PushButton></FormRow>
                      <FormRow><Label $w={102}>RepeatButton :</Label><PushButton $w={93}>0</PushButton></FormRow>
                      <FormRow><Label $w={102}>MenuButton :</Label><PushButton $w={93}>MenuButton</PushButton></FormRow>
                      <FormRow><Label $w={102} $pt={0}>SplitButton :</Label><SplitButton><SplitText>SplitButton</SplitText><FieldButton $w={16}><Triangle w={5} h={3} /></FieldButton></SplitButton></FormRow>
                    </GroupBox>
                  </div>
                  <div>
                    <GroupTitle>Boolean</GroupTitle>
                    <GroupBox $w={208} $h={101} $gap={11} $pt={11}>
                      <FormRow><Label $w={137} $pt={0}>CheckBox :</Label><CheckMark /></FormRow>
                      <FormRow><Label $w={137} $pt={0}>Tri-State CheckBox :</Label><CheckMark><Dash /></CheckMark></FormRow>
                      <FormRow><Label $w={137} $pt={0}>RadioButton :</Label><CheckMark $round /></FormRow>
                    </GroupBox>
                  </div>
                  <div>
                    <GroupTitle>Number</GroupTitle>
                    <GroupBox $w={208} $h={80} $gap={8}>
                      <FormRow><Label $w={67} $pt={0}>Spinner :</Label><Field $w={130} $h={28}><SpinnerValue>0</SpinnerValue><FieldButton $w={15} /></Field></FormRow>
                    </GroupBox>
                  </div>
                </Column>
              </Columns>
              <ScrollTrack>
                <ScrollButton><Triangle w={6} h={4} up /></ScrollButton>
                <ScrollThumb />
              </ScrollTrack>
            </ScrollArea>
          </Pane>
        </DesktopWindow>
        <Powered>powered by<PoweredLogo>qooxdoo</PoweredLogo>5.0.1</Powered>
        <Dock>
          <DockButton $active><MonitorIcon s={32} /></DockButton>
          <DockButton><CalculatorIcon /></DockButton>
          <DockButton><EyedropperIcon /></DockButton>
          <DockButton><ChartIcon /></DockButton>
          <DockButton><GlobeIcon /></DockButton>
          <DockButton><SpeakerIcon /></DockButton>
        </Dock>
      </Page>
      <TaskBar>
        <ShowDesktop><DesktopIcon /></ShowDesktop>
        <Grip />
        <Task $w={137}><DrawerIcon /><TaskText>validator</TaskText></Task>
        <Task $w={138}><DocIcon /><TaskText>[Criax-SDK -…</TaskText></Task>
        <Task $w={138}><DrawerIcon /><TaskText $ls={0.5}>Ajax</TaskText></Task>
        <Task $w={137} $active><Firefox s={16} /><TaskText $ls={0.55}>SilverBlueT…</TaskText></Task>
        <Task $w={138}><DrawerIcon /><TaskText>source</TaskText></Task>
        <Task $w={138}><DrawerIcon /><TaskText>6</TaskText></Task>
        <Applet><BlockedIcon /></Applet>
        <Workspace $active><Firefox s={15} /></Workspace>
        <Workspace />
        <Workspace />
        <Workspace />
      </TaskBar>
    </Screen>
  );
}
